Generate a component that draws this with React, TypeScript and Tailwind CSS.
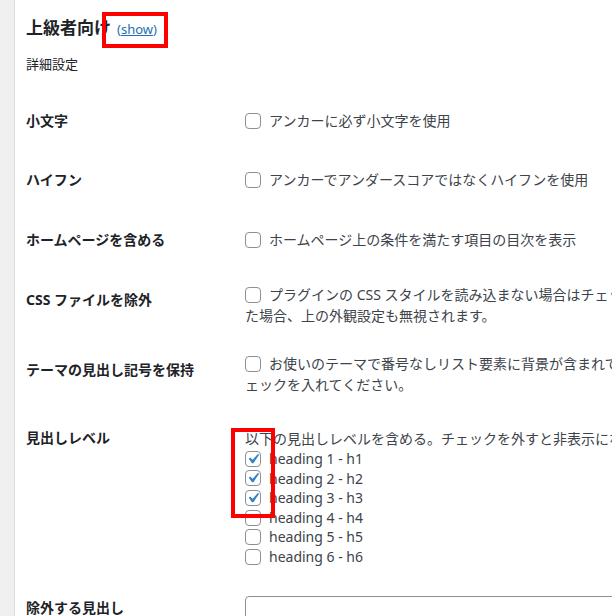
import React from 'react';

const font = { fontFamily: '"Noto Sans", "Noto Sans CJK JP", sans-serif' };

function Check({ checked = false }: { checked?: boolean }) {
  return (
    <span className="relative inline-block h-4 w-4 shrink-0 rounded-[4px] border border-[#8c8f94] bg-white align-[-3px] mr-2">
      {checked && (
        <svg viewBox="0 0 20 20" className="absolute -left-[3px] -top-[3px] h-[20px] w-[20px]">
          <path d="M14.83 4.89l1.34.94-5.81 8.38H9.02L5.78 9.67l1.34-1.25 2.57 2.4z" fill="#3582c4" />
        </svg>
      )}
    </span>
  );
}

function Row({ label, height, fieldPad, children }: { label: string; height: string; fieldPad: string; children: React.ReactNode }) {
  return (
    <div className={`flex ${height}`}>
      <div className="w-[219px] shrink-0 pt-[20px] text-[14px] leading-[18px] font-bold text-[#1d2327]">{label}</div>
      <div className={`flex-1 whitespace-nowrap text-[14px] leading-[21px] text-[#3c434a] ${fieldPad}`}>{children}</div>
    </div>
  );
}

export default function App() {
  const headings = [1, 2, 3, 4, 5, 6];

  return (
    <div className="relative flex h-[616px] w-[612px] overflow-hidden bg-white" style={font}>
      {/* admin menu edge */}
      <div className="w-[15px] shrink-0 border-r border-[#dcdcde] bg-[#f0f0f1]" />

      <div className="flex-1 pl-[11px]">
        <h2 className="mt-[16px] text-[17px] leading-[24px] font-bold text-[#1d2327]">
          上級者向け
          <span className="ml-[6px] text-[13px] font-normal text-[#2271b1]">
            (<span className="underline">show</span>)
          </span>
        </h2>
        <p className="mt-[14px] text-[13px] leading-[18px] text-[#1d2327]">詳細設定</p>

        <div className="mt-[19px]">
          <Row label="小文字" height="h-[59px]" fieldPad="pt-[18px]">
            <Check />アンカーに必ず小文字を使用
          </Row>
          <Row label="ハイフン" height="h-[60px]" fieldPad="pt-[18px]">
            <Check />アンカーでアンダースコアではなくハイフンを使用
          </Row>
          <Row label="ホームページを含める" height="h-[60px]" fieldPad="pt-[18px]">
            <Check />ホームページ上の条件を満たす項目の目次を表示
          </Row>
          <Row label="CSS ファイルを除外" height="h-[70px]" fieldPad="pt-[13px]">
            <Check />プラグインの CSS スタイルを読み込まない場合はチェックしてください。チェックし
            <br />
            た場合、上の外観設定も無視されます。
          </Row>
          <Row label="テーマの見出し記号を保持" height="h-[68px]" fieldPad="pt-[12px]">
            <Check />お使いのテーマで番号なしリスト要素に背景が含まれている場合はチ
            <br />
            ェックを入れてください。
          </Row>
          <Row label="見出しレベル" height="h-[170px]" fieldPad="pt-[19px]">
            以下の見出しレベルを含める。チェックを外すと非表示になります。
            {headings.map((n) => (
              <div key={n} className="flex h-[19.6px] items-center leading-[19.6px]">
                <Check checked={n <= 3} />
                heading {n} - h{n}
              </div>
            ))}
          </Row>
          <Row label="除外する見出し" height="h-[60px]" fieldPad="pt-[17px]">
            <div className="h-[40px] w-[420px] rounded-[4px] border border-[#8c8f94] bg-white" />
          </Row>
        </div>
      </div>

      {/* red highlight frames */}
      <div className="absolute left-[102px] top-[12px] h-[36px] w-[66px] border-4 border-[#ff0000]" />
      <div className="absolute left-[231px] top-[428px] h-[90px] w-[44px] border-4 border-[#ff0000]" />
    </div>
  );
}
